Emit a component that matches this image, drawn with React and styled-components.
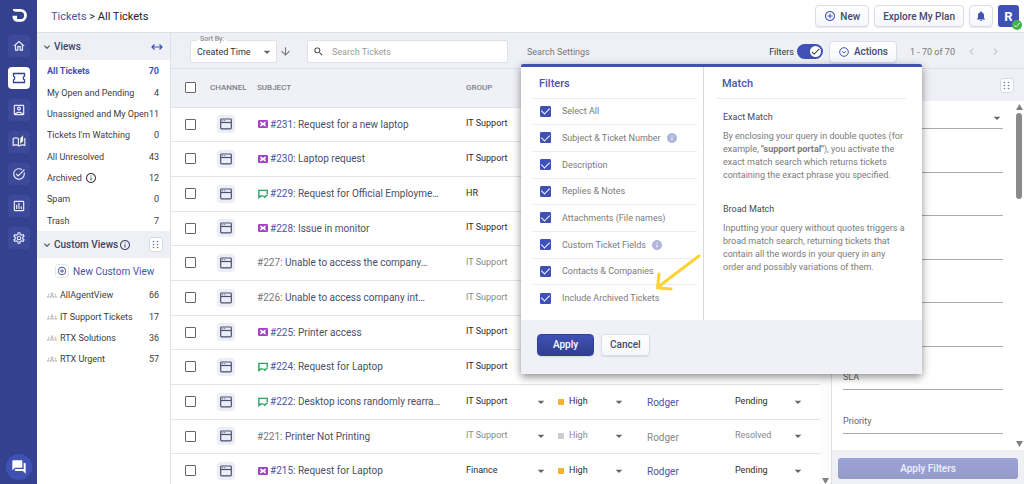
import React from 'react';
import styled, { createGlobalStyle, css } from 'styled-components';
import {
    MdOutlineHome, MdOutlineAccountBox, MdOutlineAutoStories, MdOutlineTaskAlt,
    MdOutlineAssessment, MdOutlineSettings, MdForum, MdExpandMore, MdInfoOutline,
    MdInfo, MdOutlineGroups, MdAddCircleOutline, MdNotifications, MdSearch,
    MdArrowDownward, MdChevronLeft, MdChevronRight, MdCheck, MdArrowDropDown,
} from 'react-icons/md';

const GlobalStyle = createGlobalStyle`
    * {
        box-sizing: border-box;
    }

    body {
        margin: 0;
        font-family: Roboto, 'Liberation Sans', sans-serif;
        font-size: 9px;
        color: #333;
        background: #fff;
    }

    button, input, select {
        font: inherit;
        color: inherit;
    }

    a {
        color: inherit;
        text-decoration: none;
    }
`

const Page = styled.div`
    display: flex;
    height: 100vh;
    overflow: hidden;
`

/* left rail */

const Rail = styled.nav`
    width: 37px;
    flex: none;
    display: flex;
    flex-direction: column;
    align-items: center;
    gap: 10px;
    padding: 4px 0;
    background: #33418f;
    color: #fff;
`

const Logo = styled.svg`
    width: 22px;
    height: 22px;
    margin-bottom: -1px;
`

const RailLink = styled.a`
    width: 22px;
    height: 22px;
    border-radius: 4px;
    display: flex;
    align-items: center;
    justify-content: center;
    background: ${props => (props.$active ? '#fff' : '#3d4a99')};
    color: ${props => (props.$active ? '#33418f' : '#eceefa')};

    svg {
        width: 14px;
        height: 14px;
    }
`

const ChatButton = styled.button`
    width: 26px;
    height: 26px;
    margin-top: auto;
    padding: 0;
    border: 0;
    border-radius: 50%;
    display: flex;
    align-items: center;
    justify-content: center;
    background: #3f51b5;
    color: #fff;

    svg {
        width: 16px;
        height: 16px;
    }
`

/* top bar */

const Main = styled.div`
    flex: 1;
    min-width: 0;
    display: flex;
    flex-direction: column;
`

const TopBar = styled.header`
    height: 33px;
    flex: none;
    display: flex;
    align-items: center;
    gap: 5px;
    padding: 0 5px 0 14px;
    border-bottom: 1px solid #dfe1e8;
`

const Crumbs = styled.div`
    flex: 1;
    font-size: 11px;
    color: #222;

    a {
        color: #4a55a5;
    }
`

const Button = styled.button`
    height: 22px;
    display: flex;
    align-items: center;
    justify-content: center;
    gap: 4px;
    padding: 0 8px;
    border: 1px solid #dadce6;
    border-radius: 4px;
    background: linear-gradient(#fff, #f6f7fb);
    box-shadow: 0 1px 1px rgba(50, 60, 110, 0.12);
    font-size: 10px;
    font-weight: 500;
    color: #444a6d;
    white-space: nowrap;

    svg {
        width: 12px;
        height: 12px;
        color: #3f51b5;
    }

    ${props => props.$square && css`
        width: 24px;
        padding: 0;
    `}

    ${props => props.$primary && css`
        width: 57px;
        border-color: #303f9f;
        background: linear-gradient(#3f51b5, #303f8f);
        color: #fff;
    `}
`

const Avatar = styled.div`
    position: relative;
    width: 21px;
    height: 22px;
    border-radius: 3px;
    display: flex;
    align-items: center;
    justify-content: center;
    background: #3f51b5;
    color: #fff;
    font-size: 13px;
    font-weight: 700;
`

const Online = styled.span`
    position: absolute;
    right: -3px;
    bottom: -3px;
    width: 10px;
    height: 10px;
    border-radius: 50%;
    display: flex;
    align-items: center;
    justify-content: center;
    background: #43b34a;
    color: #fff;

    svg {
        width: 8px;
        height: 8px;
    }
`

/* views */

const Body = styled.div`
    flex: 1;
    min-height: 0;
    display: flex;
    background: #eff0f5;
`

const Views = styled.aside`
    width: 134px;
    flex: none;
    border-right: 1px solid #dfe1e8;
    background: #fff;
`

const ViewsHead = styled.h2`
    height: 27px;
    margin: 0;
    padding: 0 7px 0 4px;
    display: flex;
    align-items: center;
    gap: 1px;
    background: #eff0f5;
    font-size: 10px;
    font-weight: 500;
    color: #3f4560;

    > svg {
        width: 12px;
        height: 12px;
    }
`

const Spacer = styled.span`
    flex: 1;
`

const GripButton = styled.button`
    width: 14px;
    height: 15px;
    padding: 0;
    border: 1px solid #d8dae6;
    border-radius: 3px;
    background: #fff;
    display: flex;
    align-items: center;
    justify-content: center;
`

const ViewList = styled.ul`
    list-style: none;
    margin: 0;
    padding: 0;
`

const ViewItem = styled.li`
    height: 21px;
    padding: 0 11px 0 10px;
    display: flex;
    align-items: center;
    font-weight: ${props => (props.$active ? 700 : 400)};
    color: ${props => (props.$active ? '#3f51b5' : '#3c3c3c')};
    white-space: nowrap;

    &:nth-child(3n + 1) {
        height: 22px;
    }

    a {
        flex: 1;
        display: flex;
        align-items: center;
        gap: 3px;
    }

    svg {
        width: 12px;
        height: 12px;
    }

    svg.people {
        width: 10px;
        color: #bbb;
    }
`

const NewView = styled.button`
    height: 26px;
    padding: 0 0 0 18px;
    border: 0;
    background: none;
    display: flex;
    align-items: center;
    gap: 4px;
    font-size: 10px;
    color: #4a55a5;

    span {
        width: 14px;
        height: 14px;
        border: 1px solid #e4e6f0;
        border-radius: 3px;
        display: flex;
        align-items: center;
        justify-content: center;
    }

    svg {
        width: 10px;
        height: 10px;
    }
`

/* toolbar */

const Content = styled.main`
    flex: 1;
    min-width: 0;
    display: flex;
    flex-direction: column;
`

const Toolbar = styled.div`
    height: 35px;
    flex: none;
    display: flex;
    align-items: center;
    padding: 2px 21px 0 19px;
    color: #777;
`

const SortBox = styled.label`
    position: relative;
    width: 87px;
    flex: none;
`

const SortLabel = styled.span`
    position: absolute;
    left: 7px;
    top: -6px;
    padding: 0 3px;
    background: linear-gradient(#eff0f5 60%, #fff 60%);
    font-size: 7px;
    line-height: 10px;
`

const SelectWrap = styled.span`
    position: relative;
    display: flex;
    align-items: center;

    svg {
        position: absolute;
        right: ${props => props.$inset || 0}px;
        width: 16px;
        height: 16px;
        color: #666;
        pointer-events: none;
    }
`

const SortSelect = styled.select`
    appearance: none;
    width: 100%;
    height: 23px;
    padding: 0 6px;
    border: 1px solid #dfe1e8;
    border-radius: 2px;
    background: #fff;
    color: #333;
`

const IconButton = styled.button`
    width: 16px;
    height: 22px;
    padding: 0;
    border: 0;
    background: none;
    color: ${props => props.$color || '#777'};
    display: flex;
    align-items: center;
    justify-content: center;

    svg {
        width: 13px;
        height: 13px;
    }
`

const SearchBox = styled.label`
    width: 201px;
    height: 23px;
    flex: none;
    margin: 0 19px 0 14px;
    padding: 0 5px;
    display: flex;
    align-items: center;
    gap: 8px;
    border: 1px solid #dfe1e8;
    border-radius: 2px;
    background: #fff;
    color: #333;

    svg {
        width: 11px;
        height: 11px;
        flex: none;
    }

    input {
        flex: 1;
        min-width: 0;
        padding: 0;
        border: 0;
        outline: 0;
        background: none;
    }

    input::placeholder {
        color: #999;
    }
`

const Switch = styled.label`
    display: flex;
    align-items: center;
    gap: 3px;
    margin-right: 6px;
    color: #333;

    input {
        appearance: none;
        width: 26px;
        height: 15px;
        margin: 0;
        border-radius: 8px;
        background: #3f51b5;
    }

    span {
        position: relative;
        display: flex;
    }

    svg {
        position: absolute;
        right: 2px;
        top: 2px;
        width: 11px;
        height: 11px;
        border-radius: 50%;
        background: #fff;
        color: #333;
        pointer-events: none;
    }
`

const Count = styled.span`
    margin: 0 8px 0 13px;
`

const Pager = styled.div`
    display: flex;
    gap: 8px;
`

/* tickets */

const Columns = styled.div`
    flex: 1;
    min-height: 0;
    display: flex;
    border-top: 1px solid #dfe1e8;
    background: #fff;
`

const TableArea = styled.div`
    flex: 1;
    min-width: 0;
    overflow: hidden;
`

const Table = styled.table`
    width: 100%;
    table-layout: fixed;
    border-collapse: collapse;

    th, td {
        padding: 0;
        text-align: left;
        border-bottom: 1px solid #e3e4ea;
        white-space: nowrap;
    }

    th {
        height: 38px;
        background: #f0f1f6;
        font-size: 8px;
        font-weight: 500;
        color: #7d7f8a;
    }

    th:first-child, td:first-child {
        padding-left: 14px;
    }
`

const Row = styled.tr`
    height: 35px;

    &:nth-child(3n + 1) {
        height: 34px;
    }
`

const Check = styled.input`
    appearance: none;
    width: 11px;
    height: 11px;
    margin: 0;
    border: 1px solid #666;
    border-radius: 1px;
    background: #fff;
    display: flex;
    align-items: center;
    justify-content: center;

    &:checked {
        border-color: #3f51b5;
        background: #3f51b5;
    }

    &:checked::before {
        content: '';
        width: 4px;
        height: 7px;
        margin-bottom: 2px;
        border: solid #fff;
        border-width: 0 1px 1px 0;
        transform: rotate(45deg);
    }
`

const Channel = styled.span`
    width: 18px;
    height: 18px;
    margin-left: 7px;
    border-radius: 4px;
    display: flex;
    align-items: center;
    justify-content: center;
    background: #eceef5;
`

const Subject = styled.a`
    display: flex;
    align-items: center;
    gap: 2px;
    font-size: 10px;
    color: #4b4f66;

    svg {
        flex: none;
        margin-left: 1px;
    }

    b {
        font-weight: 400;
        color: ${props => (props.$muted ? '#777' : '#4a55a5')};
    }
`

const CellSelect = styled.select`
    appearance: none;
    width: 100%;
    height: 20px;
    padding: 0 0 2px;
    border: 0;
    background: none;
    color: ${props => (props.$muted ? '#888' : '#2c2c2c')};
`

const Priority = styled.div`
    display: flex;
    align-items: center;
    gap: 5px;

    &::before {
        content: '';
        width: 6px;
        height: 6px;
        border-radius: 1px;
        background: ${props => (props.$muted ? '#ccc' : '#f5b02e')};
    }

    > span {
        flex: 1;
    }
`

const Agent = styled.a`
    display: block;
    padding-top: 2px;
    font-size: 10px;
    color: ${props => (props.$muted ? '#888' : '#4a55a5')};
`

const TableScroll = styled.div`
    width: 11px;
    flex: none;
    display: flex;
    align-items: flex-end;
    justify-content: center;
    background: #fcfcfc;
`

/* filter panel */

const Panel = styled.aside`
    width: 193px;
    flex: none;
    display: flex;
    flex-direction: column;
    border-left: 1px solid #dfe1e8;
`

const PanelHead = styled.div`
    height: 32px;
    flex: none;
    padding: 0 10px;
    display: flex;
    align-items: center;
    justify-content: flex-end;
    background: #eff0f5;
`

const PanelBody = styled.div`
    flex: 1;
    min-height: 0;
    display: flex;
    overflow: hidden;
`

const Fields = styled.div`
    flex: 1;
    padding: 0 11px;
    overflow: hidden;
`

const Field = styled.label`
    height: 43px;
    padding-bottom: 7px;
    display: flex;
    align-items: flex-end;
    gap: 4px;
    border-bottom: 1px solid #aaa;
    color: #666;

    &:nth-child(2n) {
        height: 44px;
    }

    &:first-child {
        height: 28px;
        padding-bottom: 0;
    }

    input {
        flex: 1;
        min-width: 0;
        height: 14px;
        padding: 0;
        border: 0;
        outline: 0;
        background: none;
    }
`

const FieldSelect = styled(SelectWrap)`
    flex: 1;
    height: 20px;

    select {
        appearance: none;
        width: 100%;
        border: 0;
        background: none;
    }

    svg {
        right: -2px;
    }
`

const Scrollbar = styled.div`
    width: 10px;
    flex: none;
    display: flex;
    flex-direction: column;
    align-items: center;
    gap: 3px;
    padding: 3px 0;
`

const Thumb = styled.div`
    width: 6px;
    height: 86px;
    border-radius: 3px;
    background: #8a8a8a;
`

const PanelFoot = styled.div`
    flex: none;
    padding: 8px 6px 5px;
    background: #eff0f5;
`

const ApplyFilters = styled.button`
    width: 100%;
    height: 21px;
    border: 0;
    border-radius: 3px;
    background: linear-gradient(#9ba3d6, #969cc9);
    color: #eef0fb;
    font-size: 10px;
    font-weight: 500;
`

/* search settings popup */

const Settings = styled.div`
    position: relative;
    flex: 1;
`

const SettingsLink = styled.button`
    padding: 0;
    border: 0;
    background: none;
    color: #777;
`

const Popup = styled.section`
    position: absolute;
    z-index: 2;
    left: -6px;
    top: 17px;
    width: 401px;
    border-top: 3px solid #3f51b5;
    border-radius: 2px;
    background: #fff;
    box-shadow: 0 3px 8px rgba(0, 0, 0, 0.45);
    color: #7b7b7b;
`

const PopupColumns = styled.div`
    display: grid;
    grid-template-columns: 183px 1fr;
`

const PopupColumn = styled.div`
    padding: 0 ${props => (props.$divider ? 6 : 16)}px 8px 12px;
    border-right: ${props => (props.$divider ? '1px solid #d8d8de' : '0')};

    h3 {
        height: 32px;
        margin: 0;
        padding: 0 0 0 6px;
        border-bottom: 1px solid #ececf0;
        font-size: 11px;
        line-height: 34px;
        font-weight: 500;
        color: #4a55a5;
    }

    h4 {
        margin: 11px 0 6px;
        font-size: 9px;
        line-height: 14px;
        font-weight: 400;
        color: #444a60;
    }

    h4 ~ h4 {
        margin-top: 20px;
    }

    p {
        margin: 0;
        line-height: 13px;
    }
`

const MatchText = styled.div`
    padding-left: 7px;
`

const Option = styled.label`
    height: 27px;
    padding-left: 7px;
    display: flex;
    align-items: center;
    gap: 11px;
    border-bottom: 1px solid #ececf0;

    &:nth-of-type(3n + 1) {
        height: 26px;
    }

    &:last-child {
        border-bottom: 0;
    }

    span {
        display: flex;
        align-items: center;
        gap: 5px;
    }

    svg {
        width: 12px;
        height: 12px;
        color: #b0b5dc;
    }
`

const PopupFoot = styled.div`
    display: flex;
    gap: 7px;
    padding: 14px 16px 18px;
    background: #f0f1f7;
`

const Pointer = styled.svg`
    position: absolute;
    left: 133px;
    top: 184px;
    width: 50px;
    height: 42px;
`

const Grip = () => (
    <svg width="8" height="9" fill="#6a73b5">
        {[1, 4, 7].map(y => [1.5, 5.5].map(x => <circle key={`${x}-${y}`} cx={x} cy={y + 0.5} r="0.8" />))}
    </svg>
)

const TicketIcon = () => (
    <svg viewBox="0 0 14 14" fill="none" stroke="currentColor" strokeWidth="1.3">
        <path d="M1.500 2.500h11v2.700a1.900 1.900 0 0 0 0 3.600v2.700h-11V8.800a1.900 1.900 0 0 0 0-3.600z" />
    </svg>
)

const ResizeIcon = () => (
    <svg viewBox="0 0 12 8" fill="none" stroke="#3f51b5" strokeWidth="1.2">
        <path d="M1 4h10M3.500 1.500L1 4l2.500 2.500M8.500 1.500L11 4 8.500 6.500" />
    </svg>
)

const WindowIcon = () => (
    <svg width="12" height="12" viewBox="0 0 12 12" fill="none" stroke="#4b4f72" strokeWidth="1.2">
        <rect x="0.7" y="1" width="10.600" height="9.800" rx="0.8" />
        <path d="M1 4.500h10" />
        <path d="M2 2.700h1.200M4.200 2.700h1.200" strokeWidth="0.8" />
    </svg>
)

const IncidentIcon = () => (
    <svg width="10" height="8">
        <rect width="10" height="8" rx="1.300" fill="#a342c9" />
        <path fill="#fff" d="M2.200 1.800h1.300L5 2.900l1.500-1.100h1.300v4.400H6.500L5 5.100 3.500 6.200H2.200z" />
        <path fill="#a342c9" d="M2 3l1.500 1L2 5zM8 3L6.500 4 8 5z" />
    </svg>
)

const RequestIcon = () => (
    <svg width="10" height="10" fill="none" stroke="#2ba35c" strokeWidth="1.4">
        <path d="M9.200 5V1.400H0.900v7.200L2.700 7h2" />
        <path d="M5.400 6.700l1.400 1.500 2.700-2.800" />
    </svg>
)

const CircleDown = () => (
    <svg viewBox="0 0 12 12" fill="none" stroke="currentColor" strokeWidth="1">
        <circle cx="6" cy="6" r="4.300" />
        <path d="M4.200 5.300L6 7.100l1.800-1.800" />
    </svg>
)

const Triangle = ({ up }) => (
    <svg width="7" height="6" fill="#808080">
        <path d={up ? 'M0 6h7L3.500 0z' : 'M0 0h7L3.500 6z'} />
    </svg>
)

const views = [
    ['All Tickets', 70],
    ['My Open and Pending', 4],
    ['Unassigned and My Open', 11],
    ["Tickets I'm Watching", 0],
    ['All Unresolved', 43],
    ['Archived', 12],
    ['Spam', 0],
    ['Trash', 7],
]

const customViews = [
    ['AllAgentView', 66],
    ['IT Support Tickets', 17],
    ['RTX Solutions', 36],
    ['RTX Urgent', 57],
]

const tickets = [
    { id: 231, type: 'incident', subject: 'Request for a new laptop', group: 'IT Support' },
    { id: 230, type: 'incident', subject: 'Laptop request', group: 'IT Support' },
    { id: 229, type: 'request', subject: 'Request for Official Employme…', group: 'HR' },
    { id: 228, type: 'incident', subject: 'Issue in monitor', group: 'IT Support' },
    { id: 227, subject: 'Unable to access the company…', group: 'IT Support' },
    { id: 226, subject: 'Unable to access company int…', group: 'IT Support' },
    { id: 225, type: 'incident', subject: 'Printer access', group: 'IT Support' },
    { id: 224, type: 'request', subject: 'Request for Laptop', group: 'IT Support' },
    { id: 222, type: 'request', subject: 'Desktop icons randomly rearra…', group: 'IT Support' },
    { id: 221, subject: 'Printer Not Printing', group: 'IT Support' },
    { id: 215, type: 'incident', subject: 'Request for Laptop', group: 'Finance' },
]

const searchIn = [
    { label: 'Select All' },
    { label: 'Subject & Ticket Number', info: true },
    { label: 'Description' },
    { label: 'Replies & Notes' },
    { label: 'Attachments (File names)' },
    { label: 'Custom Ticket Fields', info: true },
    { label: 'Contacts & Companies' },
    { label: 'Include Archived Tickets' },
]

const CellDropdown = ({ label, value, muted, inset }) => (
    <SelectWrap $inset={inset}>
        <CellSelect aria-label={label} defaultValue={value} $muted={muted}>
            <option>{value}</option>
        </CellSelect>
        <MdArrowDropDown />
    </SelectWrap>
)

const SearchSettings = () => (
    <Popup>
        <PopupColumns>
            <PopupColumn $divider>
                <h3>Filters</h3>
                {searchIn.map(item => (
                    <Option key={item.label}>
                        <Check type="checkbox" defaultChecked />
                        <span>{item.label}{item.info && <MdInfo />}</span>
                    </Option>
                ))}
            </PopupColumn>
            <PopupColumn>
                <h3>Match</h3>
                <MatchText>
                    <h4>Exact Match</h4>
                    <p>By enclosing your query in double quotes (for example, <strong>"support portal"</strong>), you activate the exact match search which returns tickets containing the exact phrase you specified.</p>
                    <h4>Broad Match</h4>
                    <p>Inputting your query without quotes triggers a broad match search, returning tickets that contain all the words in your query in any order and possibly variations of them.</p>
                </MatchText>
            </PopupColumn>
        </PopupColumns>
        <PopupFoot>
            <Button $primary>Apply</Button>
            <Button>Cancel</Button>
        </PopupFoot>
        <Pointer viewBox="0 0 50 42" fill="none" stroke="#fbd334" strokeWidth="3" strokeLinecap="round" strokeLinejoin="round">
            <path d="M45 5L4 36M5 23L3.500 37 17 38" />
        </Pointer>
    </Popup>
)

const TicketRow = ({ ticket }) => {
    const muted = !ticket.type
    return (
        <Row>
            <td><Check type="checkbox" aria-label={`Select #${ticket.id}`} /></td>
            <td><Channel><WindowIcon /></Channel></td>
            <td>
                <Subject href="#" $muted={muted}>
                    {ticket.type === 'incident' && <IncidentIcon />}
                    {ticket.type === 'request' && <RequestIcon />}
                    <span><b>#{ticket.id}:</b> {ticket.subject}</span>
                </Subject>
            </td>
            <td><CellDropdown label="Group" value={ticket.group} muted={muted} inset={9} /></td>
            <td>
                <Priority $muted={muted}>
                    <CellDropdown label="Priority" value="High" muted={muted} inset={20} />
                </Priority>
            </td>
            <td><Agent href="#" $muted={muted}>Rodger</Agent></td>
            <td><CellDropdown label="Status" value={muted ? 'Resolved' : 'Pending'} muted={muted} inset={14} /></td>
        </Row>
    )
}

const App = () => {
    return (
        <Page>
            <GlobalStyle />
            <Rail>
                <Logo viewBox="0 0 22 22" fill="#fff">
                    <path d="M5 5h7.500a6.400 6.400 0 0 1 0 12.800H9.500A5 5 0 0 1 4.500 13v-1.200H9V15h3.500a3.600 3.600 0 0 0 0-7.200H7.500A2.500 2.500 0 0 1 5 5z" />
                </Logo>
                <RailLink href="#" aria-label="Home"><MdOutlineHome /></RailLink>
                <RailLink href="#" aria-label="Tickets" $active><TicketIcon /></RailLink>
                <RailLink href="#" aria-label="Contacts"><MdOutlineAccountBox /></RailLink>
                <RailLink href="#" aria-label="Knowledge base"><MdOutlineAutoStories /></RailLink>
                <RailLink href="#" aria-label="Tasks"><MdOutlineTaskAlt /></RailLink>
                <RailLink href="#" aria-label="Reports"><MdOutlineAssessment /></RailLink>
                <RailLink href="#" aria-label="Settings"><MdOutlineSettings /></RailLink>
                <ChatButton aria-label="Chat"><MdForum /></ChatButton>
            </Rail>
            <Main>
                <TopBar>
                    <Crumbs><a href="#">Tickets</a> &gt; All Tickets</Crumbs>
                    <Button><MdAddCircleOutline />New</Button>
                    <Button>Explore My Plan</Button>
                    <Button $square aria-label="Notifications"><MdNotifications /></Button>
                    <Avatar>R<Online><MdCheck /></Online></Avatar>
                </TopBar>
                <Body>
                    <Views>
                        <ViewsHead><MdExpandMore />Views<Spacer /><ResizeIcon /></ViewsHead>
                        <ViewList>
                            {views.map(([name, count], i) => (
                                <ViewItem key={name} $active={i === 0}>
                                    <a href="#">{name}{name === 'Archived' && <MdInfoOutline />}</a>
                                    {count}
                                </ViewItem>
                            ))}
                        </ViewList>
                        <ViewsHead><MdExpandMore />Custom Views <MdInfoOutline /><Spacer /><GripButton aria-label="Reorder views"><Grip /></GripButton></ViewsHead>
                        <NewView><span><MdAddCircleOutline /></span>New Custom View</NewView>
                        <ViewList>
                            {customViews.map(([name, count]) => (
                                <ViewItem key={name}>
                                    <a href="#"><MdOutlineGroups className="people" />{name}</a>
                                    {count}
                                </ViewItem>
                            ))}
                        </ViewList>
                    </Views>
                    <Content>
                        <Toolbar>
                            <SortBox>
                                <SelectWrap $inset={2}>
                                    <SortSelect><option>Created Time</option></SortSelect>
                                    <MdArrowDropDown />
                                </SelectWrap>
                                <SortLabel>Sort By:</SortLabel>
                            </SortBox>
                            <IconButton aria-label="Sort direction"><MdArrowDownward /></IconButton>
                            <SearchBox>
                                <MdSearch />
                                <input type="text" aria-label="Search Tickets" placeholder="Search Tickets" />
                            </SearchBox>
                            <Settings>
                                <SettingsLink>Search Settings</SettingsLink>
                                <SearchSettings />
                            </Settings>
                            <Switch>
                                Filters
                                <span><input type="checkbox" role="switch" defaultChecked /><MdCheck /></span>
                            </Switch>
                            <Button><CircleDown />Actions</Button>
                            <Count>1 - 70 of 70</Count>
                            <Pager>
                                <IconButton $color="#c4c6d0" aria-label="Previous page"><MdChevronLeft /></IconButton>
                                <IconButton $color="#c4c6d0" aria-label="Next page"><MdChevronRight /></IconButton>
                            </Pager>
                        </Toolbar>
                        <Columns>
                            <TableArea>
                                <Table>
                                    <colgroup>
                                        <col style={{ width: 39 }} />
                                        <col style={{ width: 47 }} />
                                        <col />
                                        <col style={{ width: 92 }} />
                                        <col style={{ width: 89 }} />
                                        <col style={{ width: 88 }} />
                                        <col style={{ width: 85 }} />
                                    </colgroup>
                                    <thead>
                                        <tr>
                                            <th><Check type="checkbox" aria-label="Select all tickets" /></th>
                                            <th>CHANNEL</th>
                                            <th>SUBJECT</th>
                                            <th>GROUP</th>
                                            <th>PRIORITY</th>
                                            <th>AGENT</th>
                                            <th>STATUS</th>
                                        </tr>
                                    </thead>
                                    <tbody>
                                        {tickets.map(ticket => <TicketRow key={ticket.id} ticket={ticket} />)}
                                    </tbody>
                                </Table>
                            </TableArea>
                            <TableScroll><Triangle /></TableScroll>
                            <Panel>
                                <PanelHead><GripButton aria-label="Reorder filters"><Grip /></GripButton></PanelHead>
                                <PanelBody>
                                    <Fields>
                                        <Field>
                                            <FieldSelect><select aria-label="Filter 1" /><MdArrowDropDown /></FieldSelect>
                                        </Field>
                                        {[2, 3, 4, 5, 6].map(n => (
                                            <Field key={n}><input aria-label={`Filter ${n}`} /></Field>
                                        ))}
                                        <Field><span>SLA</span><input /></Field>
                                        <Field><span>Priority</span><input /></Field>
                                    </Fields>
                                    <Scrollbar>
                                        <Triangle up />
                                        <Thumb />
                                        <Spacer />
                                        <Triangle />
                                    </Scrollbar>
                                </PanelBody>
                                <PanelFoot><ApplyFilters>Apply Filters</ApplyFilters></PanelFoot>
                            </Panel>
                        </Columns>
                    </Content>
                </Body>
            </Main>
        </Page>
    );
}

export default App;
